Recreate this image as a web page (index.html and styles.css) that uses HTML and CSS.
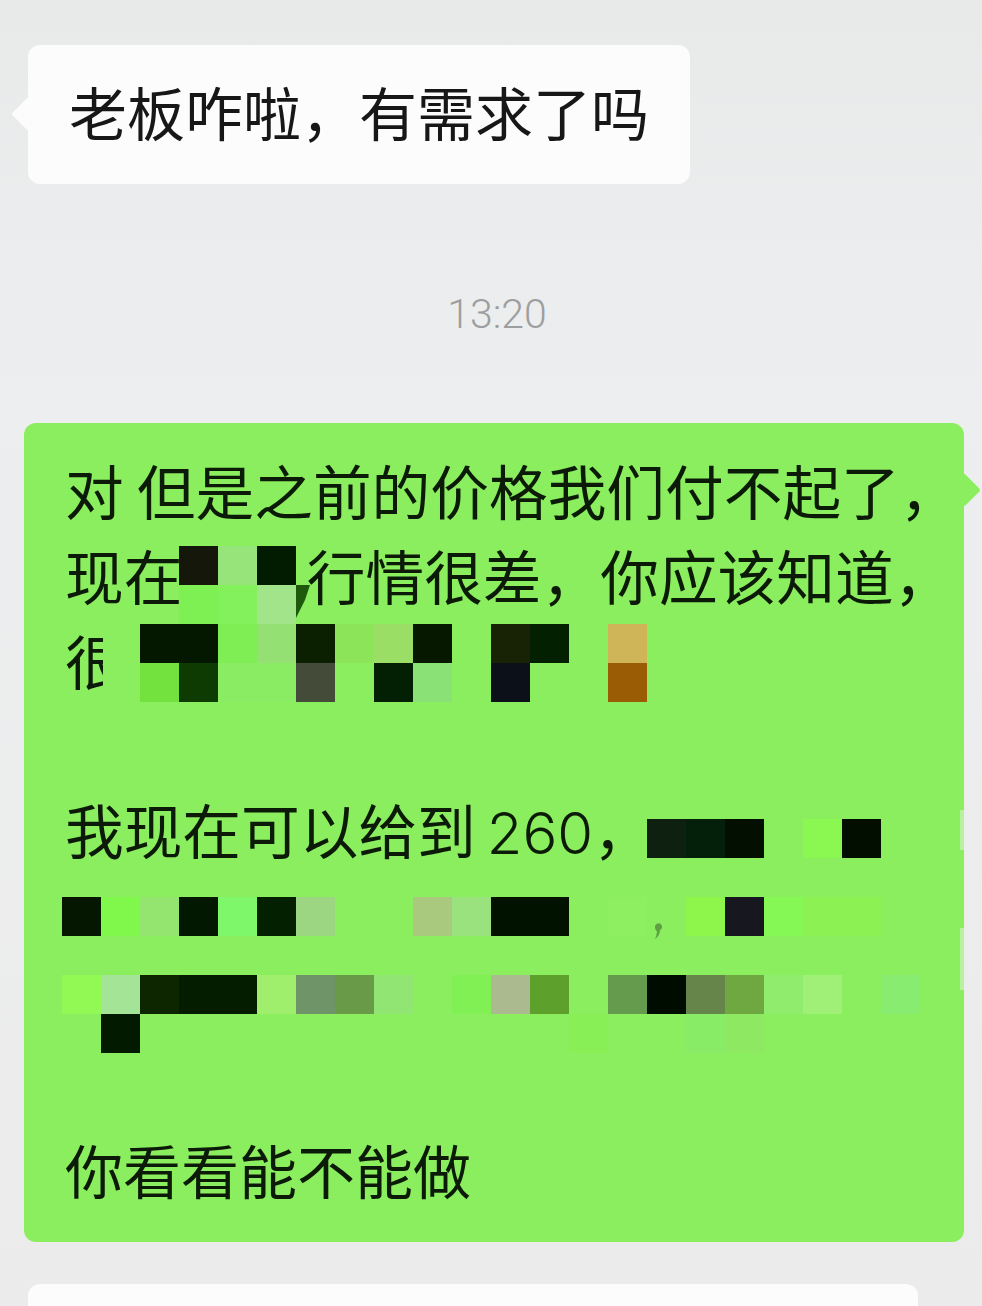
FILE: index.html
```html
<!DOCTYPE html>
<html lang="zh-CN">
<head>
<meta charset="utf-8">
<title>聊天记录</title>
<link rel="stylesheet" href="styles.css">
</head>
<body>
<main class="chat">
  <div class="bubble bubble-in">
    <p class="line">老板咋啦，有需求了吗</p>
  </div>
  <time class="stamp">13:20</time>
  <div class="bubble bubble-out">
    <p class="line">对 但是之前的价格我们付不起了，</p>
    <p class="line">现在<span class="gap"></span>行情很差，你应该知道，</p>
    <p class="line">很</p>
    <p class="line">&nbsp;</p>
    <p class="line">我现在可以给到<span class="digits">260</span>，</p>
    <p class="line">&nbsp;</p>
    <p class="line">&nbsp;</p>
    <p class="line">&nbsp;</p>
    <p class="line line-last">你看看能不能做</p>
    <svg class="mosaic" width="940" height="819" viewBox="24 423 940 819" aria-hidden="true">
      <rect x="103" y="624" width="37" height="78" fill="#8aee5e"/>
      <rect x="218" y="663" width="78" height="39" fill="#8aec62"/>
      <rect x="960" y="810" width="4" height="40" fill="#b8f2a0"/>
      <rect x="960" y="928" width="4" height="62" fill="#b8f2a0"/>
      <path d="M655 927a3.5 3.5 0 1 1 5 3c0 4-2 7-5 9c1-3 2-5 2-8c-1 0-2-2-2-4z" fill="#5f9f45"/>
      <g class="cells-a">
        <rect x="179" y="546" width="39" height="39" fill="#14170a"/>
        <rect x="218" y="546" width="39" height="39" fill="#97e47a"/>
        <rect x="257" y="546" width="39" height="39" fill="#011c00"/>
        <rect x="179" y="585" width="39" height="39" fill="#7ff053"/>
        <rect x="218" y="585" width="39" height="39" fill="#82f15c"/>
        <rect x="257" y="585" width="39" height="39" fill="#a2e48a"/>
        <polygon points="296,585 310,585 305,600 296,618" fill="#1f5a0c"/>
        <rect x="140" y="624" width="78" height="39" fill="#041800"/>
        <rect x="218" y="624" width="39" height="39" fill="#7fee55"/>
        <rect x="257" y="624" width="39" height="39" fill="#94e073"/>
        <rect x="296" y="624" width="39" height="39" fill="#0a2000"/>
        <rect x="335" y="624" width="39" height="39" fill="#8ce558"/>
        <rect x="374" y="624" width="39" height="39" fill="#9ade66"/>
        <rect x="413" y="624" width="39" height="39" fill="#071800"/>
        <rect x="491" y="624" width="39" height="39" fill="#182205"/>
        <rect x="530" y="624" width="39" height="39" fill="#032000"/>
        <rect x="608" y="624" width="39" height="39" fill="#cfb558"/>
        <rect x="140" y="663" width="39" height="39" fill="#73e23f"/>
        <rect x="179" y="663" width="39" height="39" fill="#0d3b02"/>
        <rect x="296" y="663" width="39" height="39" fill="#444b38"/>
        <rect x="374" y="663" width="39" height="39" fill="#031f04"/>
        <rect x="413" y="663" width="39" height="39" fill="#8ae276"/>
        <rect x="491" y="663" width="39" height="39" fill="#0c1119"/>
        <rect x="608" y="663" width="39" height="39" fill="#9a5c05"/>
      </g>
      <g class="cells-b">
        <rect x="647" y="819" width="39" height="39" fill="#0e2010"/>
        <rect x="686" y="819" width="39" height="39" fill="#04200a"/>
        <rect x="725" y="819" width="39" height="39" fill="#030f00"/>
        <rect x="803" y="819" width="39" height="39" fill="#8bf851"/>
        <rect x="842" y="819" width="39" height="39" fill="#020f00"/>
        <rect x="62" y="897" width="39" height="39" fill="#051700"/>
        <rect x="101" y="897" width="39" height="39" fill="#7ff84b"/>
        <rect x="140" y="897" width="39" height="39" fill="#94e56f"/>
        <rect x="179" y="897" width="39" height="39" fill="#031800"/>
        <rect x="218" y="897" width="39" height="39" fill="#7ef86a"/>
        <rect x="257" y="897" width="39" height="39" fill="#032000"/>
        <rect x="296" y="897" width="39" height="39" fill="#9dd683"/>
        <rect x="413" y="897" width="39" height="39" fill="#a9c97e"/>
        <rect x="452" y="897" width="39" height="39" fill="#99e27d"/>
        <rect x="491" y="897" width="78" height="39" fill="#011200"/>
        <rect x="608" y="897" width="39" height="39" fill="#8eef60"/>
        <rect x="686" y="897" width="39" height="39" fill="#8ef64a"/>
        <rect x="725" y="897" width="39" height="39" fill="#17181f"/>
        <rect x="764" y="897" width="39" height="39" fill="#86f856"/>
        <rect x="803" y="897" width="78" height="39" fill="#8cf153"/>
        <rect x="62" y="975" width="39" height="39" fill="#92f853"/>
        <rect x="101" y="975" width="39" height="39" fill="#a4e496"/>
        <rect x="140" y="975" width="39" height="39" fill="#0e2600"/>
        <rect x="179" y="975" width="78" height="39" fill="#041c00"/>
        <rect x="257" y="975" width="39" height="39" fill="#a0ef6c"/>
        <rect x="296" y="975" width="39" height="39" fill="#6f9467"/>
        <rect x="335" y="975" width="39" height="39" fill="#689a48"/>
        <rect x="374" y="975" width="39" height="39" fill="#91e673"/>
        <rect x="452" y="975" width="39" height="39" fill="#80f054"/>
        <rect x="491" y="975" width="39" height="39" fill="#acba90"/>
        <rect x="530" y="975" width="39" height="39" fill="#5ea02c"/>
        <rect x="608" y="975" width="39" height="39" fill="#659b4d"/>
        <rect x="647" y="975" width="39" height="39" fill="#000c00"/>
        <rect x="686" y="975" width="39" height="39" fill="#66854a"/>
        <rect x="725" y="975" width="39" height="39" fill="#6fa840"/>
        <rect x="764" y="975" width="39" height="39" fill="#90ec6c"/>
        <rect x="803" y="975" width="39" height="39" fill="#a0f078"/>
        <rect x="881" y="975" width="39" height="39" fill="#87ec70"/>
        <rect x="101" y="1014" width="39" height="39" fill="#021a00"/>
        <rect x="569" y="1014" width="39" height="39" fill="#88ef57"/>
        <rect x="686" y="1014" width="39" height="39" fill="#89ec66"/>
        <rect x="725" y="1014" width="39" height="39" fill="#8fe862"/>
      </g>
    </svg>
  </div>
  <div class="bubble bubble-next"></div>
</main>
</body>
</html>
```
FILE: styles.css
```css
* { box-sizing: border-box; }
html, body { margin: 0; height: 100%; }
body {
  background: linear-gradient(180deg, #e8e9e9 0%, #edeeef 30%, #ebebeb 100%);
  font-family: "Noto Sans CJK SC", "Noto Sans", sans-serif;
  overflow: hidden;
}
.chat {
  display: flex;
  flex-direction: column;
  align-items: flex-start;
  height: 1306px;
  padding: 45px 18px 0 24px;
  overflow: hidden;
}
.bubble { position: relative; flex: none; border-radius: 12px; }
.bubble::after {
  content: "";
  position: absolute;
  width: 24px;
  height: 24px;
  transform: rotate(45deg);
  border-radius: 3px;
  background: inherit;
}
.line {
  margin: 0;
  font-size: 58px;
  line-height: 84.85px;
  color: #0c1a08;
  white-space: pre;
}
.bubble-in {
  margin-left: 4px;
  width: 662px;
  height: 139px;
  padding: 24px 0 0 41px;
  background: #fcfcfd;
}
.bubble-in .line { color: #171717; }
.bubble-in::after { left: -12px; top: 57px; }
.stamp {
  align-self: center;
  margin: 106px 0 0 6px;
  height: 46px;
  font-family: Roboto, sans-serif;
  font-size: 41px;
  line-height: 48px;
  font-weight: 300;
  color: #9d9e9f;
}
.bubble-out {
  margin-top: 87px;
  width: 940px;
  height: 819px;
  padding: 25px 0 0 41px;
  background: #8aee5e;
}
.bubble-out .line { font-size: 58.7px; }
.bubble-out .line-last { margin-top: -4px; font-size: 58px; }
.bubble-out::after { right: -12px; top: 55px; }
.gap { display: inline-block; width: 2.12em; }
.digits { margin-left: 11px; font-family: Inter, sans-serif; font-size: 58px; font-weight: 300; }
.mosaic { position: absolute; left: 0; top: 0; }
.bubble-next {
  margin: 42px 0 0 4px;
  width: 890px;
  height: 100px;
  background: #fcfcfd;
}
.bubble-next::after { display: none; }
```
